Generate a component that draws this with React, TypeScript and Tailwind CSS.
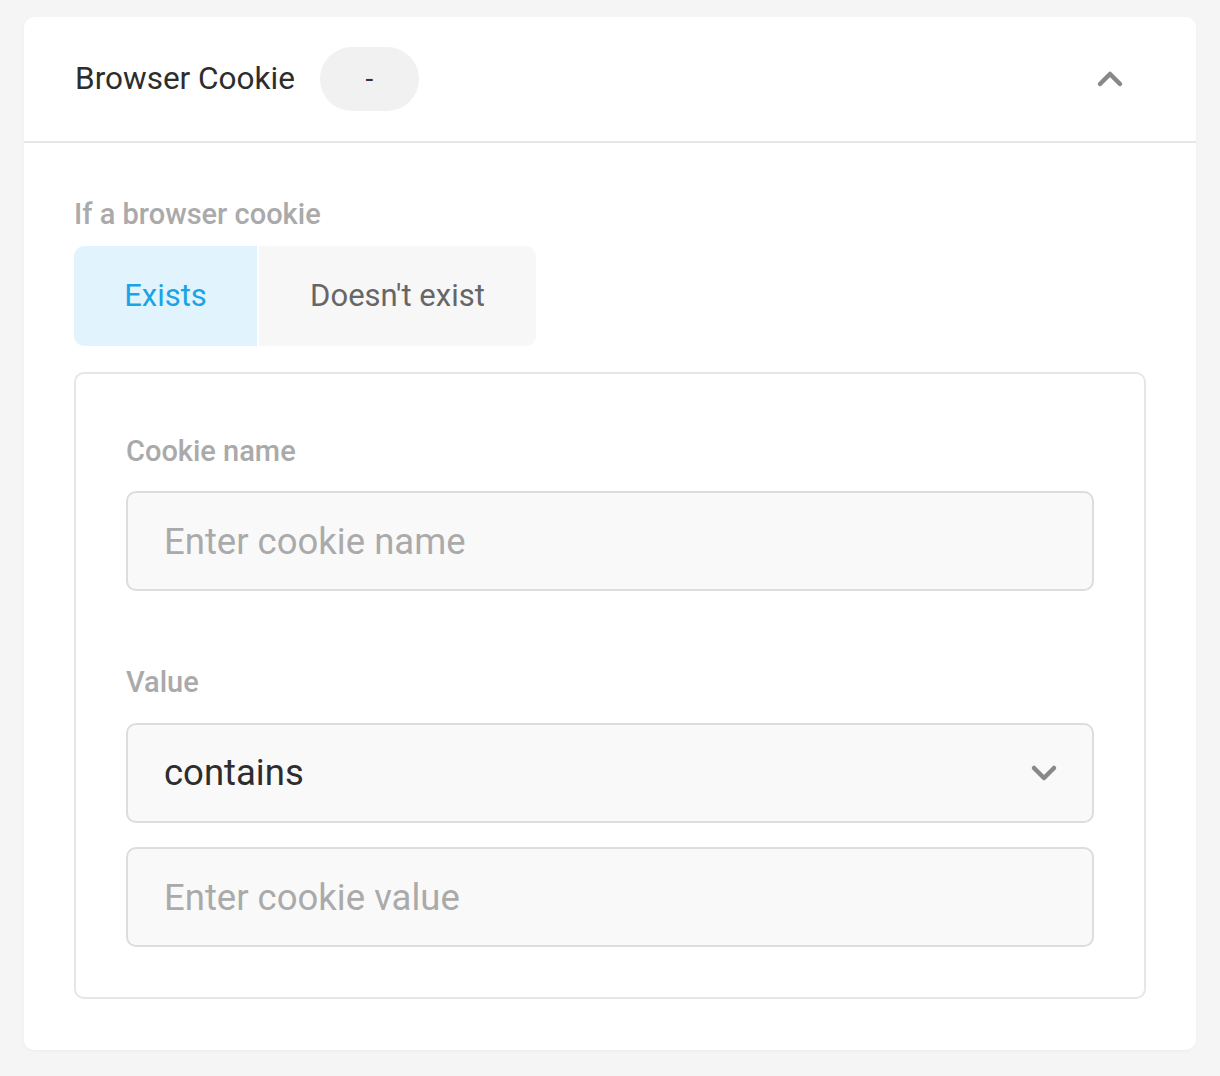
import { useState } from "react";

function Chevron({ up }: { up?: boolean }) {
  return (
    <svg
      width="28"
      height="28"
      viewBox="0 0 28 28"
      fill="none"
      stroke="#888888"
      strokeWidth={4.5}
      strokeLinecap="round"
      strokeLinejoin="round"
    >
      <path d={up ? "M4 19 L14 9 L24 19" : "M4 9 L14 19 L24 9"} />
    </svg>
  );
}

export default function App() {
  const [exists, setExists] = useState(true);
  const [name, setName] = useState("");
  const [value, setValue] = useState("");

  return (
    <div
      className="min-h-[1076px] bg-[#f5f5f5] px-6 pt-[17px] pb-6"
      style={{ fontFamily: "Roboto, 'Noto Sans', sans-serif" }}
    >
      <div className="rounded-[10px] bg-white shadow-[0_1px_3px_rgba(0,0,0,0.04)]">
        {/* Header */}
        <div className="flex h-[126px] items-center border-b-2 border-[#e6e6e6] pl-[51px] pr-[72px]">
          <h2 className="text-[31.5px] font-normal leading-10 text-[#2d2d2d]">Browser Cookie</h2>
          <span className="ml-[25px] flex h-16 w-[99px] items-center justify-center rounded-full bg-[#f1f1f1] text-[28px] text-[#333]">
            -
          </span>
          <div className="flex-1" />
          <Chevron up />
        </div>

        {/* Body */}
        <div className="px-[50px] pt-[54px] pb-[51px]">
          <p className="text-[29px] font-medium leading-[34px] text-[#aaaaaa]">If a browser cookie</p>
          <div className="mt-[15px] flex h-[100px] w-[462px] overflow-hidden rounded-[10px]">
            <button
              type="button"
              onClick={() => setExists(true)}
              className={`w-[183px] text-[31px] ${exists ? "bg-[#e1f4fd] text-[#1aa4e6]" : "bg-[#f7f7f7] text-[#666]"}`}
            >
              Exists
            </button>
            <div className="w-[2px] bg-white" />
            <button
              type="button"
              onClick={() => setExists(false)}
              className={`flex-1 text-[31px] ${!exists ? "bg-[#e1f4fd] text-[#1aa4e6]" : "bg-[#f7f7f7] text-[#666]"}`}
            >
              Doesn't exist
            </button>
          </div>

          <div className="mt-[26px] rounded-[10px] border-2 border-[#e6e6e6] px-[50px] pt-[60px] pb-[50px]">
            <label className="block text-[29px] font-medium leading-[34px] text-[#aaaaaa]">Cookie name</label>
            <input
              value={name}
              onChange={(e) => setName(e.target.value)}
              placeholder="Enter cookie name"
              className="mt-[23px] block h-[100px] w-full rounded-[10px] border-2 border-[#dddddd] bg-[#f9f9f9] px-9 text-[36.5px] text-[#333] outline-none placeholder:text-[#aaaaaa]"
            />

            <label className="mt-[74px] block text-[29px] font-medium leading-[34px] text-[#aaaaaa]">Value</label>
            <div className="mt-[24px] flex h-[100px] w-full items-center rounded-[10px] border-2 border-[#dddddd] bg-[#f9f9f9] pl-9 pr-[34px]">
              <span className="flex-1 text-[36.5px] text-[#2d2d2d]">contains</span>
              <Chevron />
            </div>
            <input
              value={value}
              onChange={(e) => setValue(e.target.value)}
              placeholder="Enter cookie value"
              className="mt-[24px] block h-[100px] w-full rounded-[10px] border-2 border-[#dddddd] bg-[#f9f9f9] px-9 text-[36.5px] text-[#333] outline-none placeholder:text-[#aaaaaa]"
            />
          </div>
        </div>
      </div>
    </div>
  );
}
